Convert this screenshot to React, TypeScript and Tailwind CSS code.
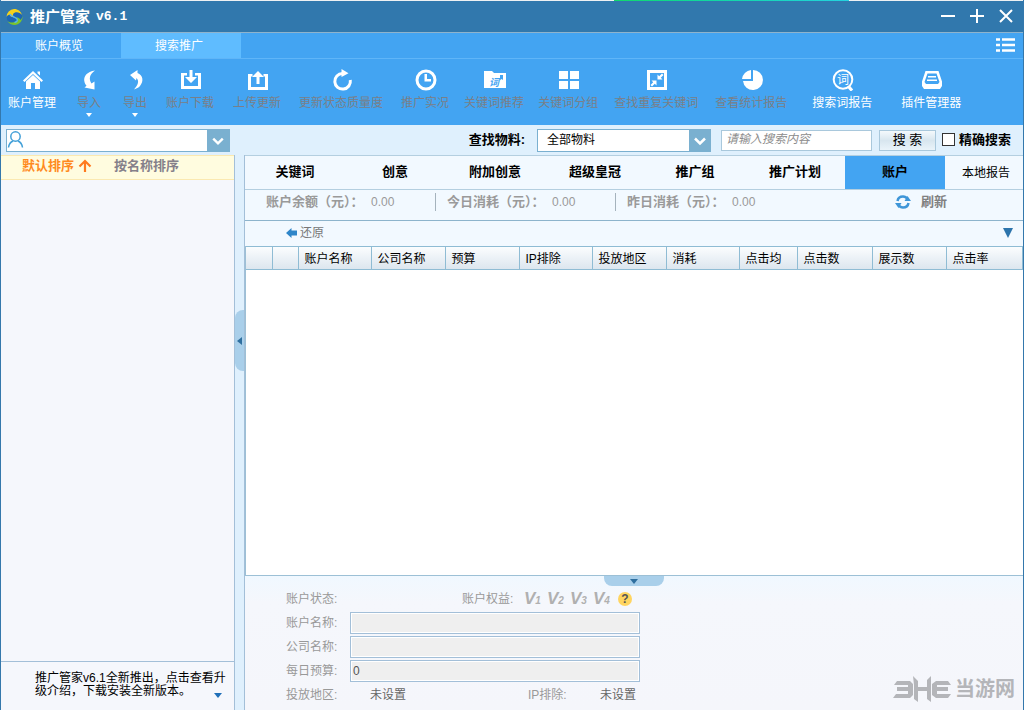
import { useState } from 'react';
import type { ReactNode } from 'react';

interface Tool {
  label: string;
  icon: ReactNode;
  margin: string;
  enabled?: boolean;
  menu?: boolean;
}

const icons = {
  home: (
    <>
      <path d="M1 11.5 11 2l10 9.500-1.500 1.500L11 5l-8.500 8z" />
      <path d="M15.500 2.500h2.500v4l-2.500-2.300z" />
      <path d="M4 12.500 11 6l7 6.500V20h-5v-6H9v6H4z" />
    </>
  ),
  importArrow: <path d="M16 1.500C8 2.500 4 7.500 5.500 13c.4 1.500 1 2.500 2 3.700L5.500 18.500l10 2V12.500l-3 2C9.500 10 10.500 5 16 1.500z" />,
  exportArrow: <path d="M5 6 12.500 1v3C18 6 19 12 15 17c-1.500 1.800-3.500 2.700-6 3.500C13 16 14.500 12 11.500 9L11 11.500z" />,
  download: (
    <>
      <path d="M1 4h6v2.500H4V17h14V6.500h-3V4h6v16H1z" />
      <path d="M9.500 1h3v7H17l-6 6-6-6h4.500z" />
    </>
  ),
  upload: (
    <>
      <path d="M1 5h4.500v2.500H4V18h14V7.500h-1.500V5H21v16H1z" />
      <path d="M9.500 15h3V8H17l-6-6-6 6h4.500z" />
    </>
  ),
  refresh: (
    <>
      <path d="M11.500 4.500A7.800 7.800 0 1 0 19.300 11" fill="none" stroke="currentColor" strokeWidth="3" />
      <path d="M10.500 0v8l7-3.800z" />
    </>
  ),
  clock: (
    <>
      <circle cx="11" cy="11" r="9" fill="none" stroke="currentColor" strokeWidth="3" />
      <path d="M9.500 5h2.500v5h4v2.500H9.500z" />
    </>
  ),
  folder: (
    <>
      <path d="M0 2h8l2 2h12v15H0z" />
      <path d="M16 6h3v5l-1.500-1-1.500 1z" fill="#43a4f2" />
      <text x="5" y="17" fontSize="10" fontWeight="700" fontStyle="italic" fill="#43a4f2">词</text>
    </>
  ),
  tiles: <path d="M1 2h9v8H1zM12 2h9v8h-9zM1 12h9v8H1zM12 12h9v8h-9z" />,
  shrink: (
    <>
      <path fillRule="evenodd" d="M1 1h20v20H1zM4 4v14h14V4z" />
      <path d="M11.500 10.500v-5l1.700 1.700L16 4.500 17.500 6l-2.700 2.800 1.700 1.700zM10.500 11.500v5l-1.700-1.700L6 17.500 4.500 16l2.700-2.800-1.700-1.700z" />
    </>
  ),
  pie: (
    <>
      <path d="M12 1a10 10 0 1 1-10 11h10z" />
      <path d="M10 1v9H1A10 10 0 0 1 10 1z" />
    </>
  ),
  wordSearch: (
    <>
      <circle cx="11" cy="10.500" r="9.300" fill="none" stroke="currentColor" strokeWidth="2" />
      <path d="m16.500 17.500 3.500 4" stroke="currentColor" strokeWidth="3.200" />
      <text x="5" y="15" fontSize="12">词</text>
    </>
  ),
  plugin: (
    <>
      <path fillRule="evenodd" d="M4.500 2h13L21 12.500V17l-2 3H3l-2-3v-4.500zM6.500 4.500 3.500 13l1.500 2h12l1.500-2-3-8.500z" />
      <path d="M7 7h8v1.500H7zM6 10.500h10V12H6z" />
    </>
  ),
};

const tools: Tool[] = [
  { label: '账户管理', icon: icons.home, margin: 'ml-[7px]', enabled: true },
  { label: '导入', icon: icons.importArrow, margin: 'ml-[21px]', menu: true },
  { label: '导出', icon: icons.exportArrow, margin: 'ml-[22px]', menu: true },
  { label: '账户下载', icon: icons.download, margin: 'ml-[19px]' },
  { label: '上传更新', icon: icons.upload, margin: 'ml-[19px]' },
  { label: '更新状态质量度', icon: icons.refresh, margin: 'ml-[18px]' },
  { label: '推广实况', icon: icons.clock, margin: 'ml-[18px]' },
  { label: '关键词推荐', icon: icons.folder, margin: 'ml-[15px]' },
  { label: '关键词分组', icon: icons.tiles, margin: 'ml-[14px]' },
  { label: '查找重复关键词', icon: icons.shrink, margin: 'ml-4' },
  { label: '查看统计报告', icon: icons.pie, margin: 'ml-[17px]' },
  { label: '搜索词报告', icon: icons.wordSearch, margin: 'ml-[25px]', enabled: true },
  { label: '插件管理器', icon: icons.plugin, margin: 'ml-[29px]', enabled: true },
];

const tabs = ['关键词', '创意', '附加创意', '超级皇冠', '推广组', '推广计划', '账户'];

const stats = [
  { label: '账户余额（元）：', value: '0.00' },
  { label: '今日消耗（元）：', value: '0.00' },
  { label: '昨日消耗（元）：', value: '0.00' },
];

const columns = [
  { label: '', width: 'w-[26px]' },
  { label: '', width: 'w-[26px]' },
  { label: '账户名称', width: 'w-[73px]' },
  { label: '公司名称', width: 'w-[74px]' },
  { label: '预算', width: 'w-[74px]' },
  { label: 'IP排除', width: 'w-[73px]' },
  { label: '投放地区', width: 'w-[74px]' },
  { label: '消耗', width: 'w-[73px]' },
  { label: '点击均', width: 'w-[58px]' },
  { label: '点击数', width: 'w-[75px]' },
  { label: '展示数', width: 'w-[74px]' },
  { label: '点击率', width: 'w-[76px]' },
];

function Chevron() {
  return (
    <svg viewBox="0 0 22 22" className="size-full" fill="none" stroke="#fff" strokeWidth="2.500">
      <path d="m6 9 5 5 5-5" />
    </svg>
  );
}

function TitleBar() {
  return (
    <header className="flex h-8 items-center border-b border-[#8fb3cc] bg-[#3178ad] pl-[5px] text-white">
      <svg viewBox="0 0 18 18" className="size-4.5">
        <circle cx="8.500" cy="9" r="7.800" fill="#1c66b4" />
        <path d="M.5 9A8 8 0 0 1 8 1c3.500-.2 7 2 8 6-2-2.500-4.500-3.200-7-2.500-2.600.8-2.500 3.500-.5 4.700C6 9.500 4 8.500 3.500 6.500 2 7 1 8 .5 9z" fill="#f4d21c" />
        <path d="M16.500 8c.5 4.500-3 9-8 9-3 0-5.500-1.500-7-4 2.500 1.800 5.500 2 7.800.8 2-1 2.200-3 .7-4.600 2.500.3 4 1.300 4.500 2.800 1-.8 1.700-2.200 2-4z" fill="#7cc52c" />
        <path d="M4 6c.5 2.500 5.500 3 7 5 1.200 1.700-.5 3.200-2.500 3.300" fill="none" stroke="#55b4f2" strokeWidth="1.300" />
      </svg>
      <h1 className="ml-1.5 flex items-center gap-1.5 text-[15px] leading-5 font-bold">
        推广管家
        <span className="font-['Liberation_Mono',monospace] text-[13px]">v6.1</span>
      </h1>
      <div className="mr-[9px] ml-auto flex gap-[13px]">
        <button type="button" aria-label="最小化" className="size-4">
          <svg viewBox="0 0 16 16" stroke="#fff" strokeWidth="2"><path d="M1 7h14" /></svg>
        </button>
        <button type="button" aria-label="最大化" className="size-4">
          <svg viewBox="0 0 16 16" stroke="#fff" strokeWidth="2"><path d="M1 7h14M8 0v14" /></svg>
        </button>
        <button type="button" aria-label="关闭" className="size-4">
          <svg viewBox="0 0 16 16" stroke="#fff" strokeWidth="2"><path d="m2 1 12 12M14 1 2 13" /></svg>
        </button>
      </div>
    </header>
  );
}

function Toolbar() {
  return (
    <div className="bg-[#43a4f2] text-white">
      <nav className="flex h-[26px] border-b border-[#5fb5f8]">
        <button type="button" className="w-[120px] pr-1">账户概览</button>
        <button type="button" className="w-[120px] bg-[#5fbcff] pr-1">搜索推广</button>
        <button type="button" aria-label="菜单" className="mr-[7px] mb-0.5 ml-auto">
          <svg viewBox="0 0 20 16" className="h-4 w-5" stroke="#fff" strokeWidth="2.500">
            <path d="M0 2.500h4M6 2.500h13M0 8h4M6 8h13M0 13.500h4M6 13.500h13" />
          </svg>
        </button>
      </nav>
      <div className="flex h-[66px] items-start pt-2.5">
        {tools.map(t => (
          <button
            key={t.label}
            type="button"
            disabled={!t.enabled}
            className={`flex shrink-0 flex-col items-center leading-4 ${t.margin} ${
              t.enabled ? 'text-white' : 'text-[#7a7f88]'
            }`}
          >
            <svg viewBox="0 0 22 22" className="ml-0.5 size-[22px] text-white" fill="currentColor">
              {t.icon}
            </svg>
            <span className="mt-1">{t.label}</span>
            {t.menu && (
              <svg viewBox="0 0 6 4" className="mt-0.5 h-1 w-1.5" fill="#fff"><path d="M0 0h6L3 4z" /></svg>
            )}
          </button>
        ))}
      </div>
    </div>
  );
}

function FilterBar() {
  const [search, setSearch] = useState('');

  return (
    <div className="flex h-[30px] items-center bg-[#dff0fd] pr-3 pl-[5px]">
      <div className="flex h-[23px] w-[224px] border border-[#7ab0d0] bg-white">
        <svg viewBox="0 0 18 20" className="h-5 w-[18px]" fill="none" stroke="#43a0d8" strokeWidth="1.500">
          <circle cx="8.500" cy="6.500" r="4.700" />
          <path d="M1.500 17.500c.5-3.500 2-5.500 4.500-6.500M15.500 17.500c-.5-3.500-2-5.500-4.500-6.500" />
        </svg>
        <input type="text" aria-label="选择账户" className="min-w-0 flex-1 outline-none" />
        <button type="button" aria-label="展开账户" className="w-[22px] bg-[#7ab0d0]"><Chevron /></button>
      </div>
      <label htmlFor="material" className="ml-auto text-[13px] font-bold">查找物料:</label>
      <div className="relative ml-3 h-[23px] w-[174px]">
        <select id="material" className="size-full appearance-none border border-[#7ab0d0] bg-white pr-6 pl-[9px] outline-none">
          <option>全部物料</option>
        </select>
        <span className="pointer-events-none absolute inset-y-0 right-0 w-[22px] bg-[#7ab0d0]"><Chevron /></span>
      </div>
      <input
        type="text"
        aria-label="搜索内容"
        value={search}
        onChange={e => setSearch(e.target.value)}
        placeholder="请输入搜索内容"
        className="ml-2.5 h-[21px] w-[151px] border border-[#a9c8dc] bg-white px-1 pb-0.5 outline-none placeholder:text-[#8c8c8c] placeholder:italic"
      />
      <button
        type="button"
        className="ml-[7px] h-[21px] w-[57px] border border-[#a9c8dc] bg-linear-to-b from-[#f4f9fc] via-[#d8e6ef] to-[#eaf4fa] pb-0.5 text-[13px] leading-[17px]"
      >
        搜 索
      </button>
      <label className="ml-1.5 flex items-center gap-1 text-[13px] font-bold">
        <input type="checkbox" className="size-[13px] appearance-none border border-[#333] bg-white checked:bg-[#43a4f2]" />
        精确搜索
      </label>
    </div>
  );
}

function Sidebar() {
  return (
    <aside className="flex w-[233px] shrink-0 flex-col bg-[#f5f7fc]">
      <div className="flex h-[25px] items-center border-y border-[#fbe9b0] bg-[#fffcdf] pb-1 pl-[21px] text-[13px] leading-5 font-bold">
        <button type="button" className="flex items-center gap-1 text-[#ff8a1e]">
          默认排序
          <svg viewBox="0 0 14 14" className="size-3.5" fill="none" stroke="#ff7a1e" strokeWidth="2.200">
            <path d="M7 13V2M1.500 7.500 7 2l5.500 5.500" />
          </svg>
        </button>
        <button type="button" className="ml-[22px] text-[#85808a]">按名称排序</button>
      </div>
      <div className="mt-auto flex h-[49px] items-start border-t border-[#a3bfd8] pt-2.5 pl-[34px]">
        <a href="#news" className="leading-[13px] whitespace-nowrap text-black">
          推广管家v6.1全新推出，点击查看升
          <br />
          级介绍，下载安装全新版本。
        </a>
        <svg viewBox="0 0 8 5" className="-ml-3 mt-[21px] h-[5px] w-2 shrink-0" fill="#1f6fb8"><path d="M0 0h8L4 5z" /></svg>
      </div>
    </aside>
  );
}

function AccountTable() {
  return (
    <div className="flex-1 border-b border-l border-[#9cc0d6] bg-white pr-px">
      <table className="w-full table-fixed border-collapse">
        <thead>
          <tr className="h-[23px] bg-linear-to-b from-[#fbfdfe] to-[#dbe5ee]">
            {columns.map((c, i) => (
              <th
                key={i}
                scope="col"
                className={`border-y border-r border-[#8fbcd4] p-0 pt-px pl-1.5 text-left leading-4 font-normal whitespace-nowrap ${c.width}`}
              >
                {c.label}
              </th>
            ))}
          </tr>
        </thead>
        <tbody />
      </table>
    </div>
  );
}

function Field({ id, label, value }: { id: string; label: string; value: string }) {
  return (
    <div className="flex h-6 items-center">
      <label htmlFor={id} className="w-16 text-[#999]">{label}:</label>
      <input
        id={id}
        readOnly
        defaultValue={value}
        className="h-[22px] w-[290px] border border-[#a3bfd8] bg-[#efefef] px-0.5 text-[#555] shadow-[inset_0_0_0_1px_#fff] outline-none"
      />
    </div>
  );
}

function Details() {
  return (
    <section className="relative h-[134px] bg-linear-to-b from-[#f0f8ff] via-[#f5f7fc] via-20% to-[#f5f6fb]">
      <button type="button" aria-label="收起" className="mx-auto flex h-2.5 w-[60px] items-center justify-center rounded-b-lg bg-[#a9cfea]">
        <svg viewBox="0 0 8 5" className="h-[5px] w-2" fill="#2f6f9f"><path d="M0 0h8L4 5z" /></svg>
      </button>
      <div className="pt-px pl-[41px]">
        <div className="flex h-6 items-center text-[#999]">
          <span className="w-44">账户状态:</span>
          <span className="w-[62px]">账户权益:</span>
          {['1', '2', '3', '4'].map(n => (
            <span key={n} className="flex w-[23px] items-end leading-4 font-bold text-[#b0b0b0] italic">
              <span className="text-[17px]">V</span>
              <span className="text-[10px] leading-3">{n}</span>
            </span>
          ))}
          <button type="button" aria-label="帮助" className="ml-0.5 size-3.5 rounded-full bg-[#ffd560] leading-3.5 font-bold text-[#555]">?</button>
        </div>
        <Field id="accountName" label="账户名称" value="" />
        <Field id="companyName" label="公司名称" value="" />
        <Field id="dailyBudget" label="每日预算" value="0" />
        <div className="flex h-6 items-center text-[#999]">
          <span className="w-[84px]">投放地区:</span>
          <span className="w-[158px] text-[#666]">未设置</span>
          <span className="w-[72px]">IP排除:</span>
          <span className="text-[#666]">未设置</span>
        </div>
      </div>
      <div className="absolute right-2 bottom-2 flex items-center gap-1 text-[#b4b5b9]">
        <svg viewBox="0 0 58 26" className="h-[26px] w-[58px]" fill="currentColor">
          <path d="M4 5h13l3 3v11l-3 3H0l3-4h12v-3H4v-4h11V9H1z" />
          <path d="m20 0 5 5v6h9V4l4-4v26l-4-3v-8h-9v11l-4-3V9z" />
          <path d="M55 5H43l-4 3v11l4 3h12l3-4H44v-3h11v-4H44V9h14z" />
        </svg>
        <span className="text-[20px] leading-6 font-bold">当游网</span>
      </div>
    </section>
  );
}

export default function App() {
  const [activeTab, setActiveTab] = useState('账户');

  return (
    <div className="flex min-h-screen flex-col border-x border-[#3478ac] font-['Liberation_Sans','Noto_Sans_CJK_SC',sans-serif] text-xs text-black">
      <div className="flex h-px bg-[#eef1f3]">
        <div className="ml-[60%] w-[23%] bg-linear-to-r from-[#12d86b] to-[#25d3e0]" />
      </div>
      <TitleBar />
      <Toolbar />
      <FilterBar />
      <main className="flex flex-1">
        <Sidebar />
        <div className="w-[11px] shrink-0 border-x border-[#a3bfd8] bg-[#dff0fd]">
          <button type="button" aria-label="收起侧栏" className="mt-[155px] flex h-[61px] w-full items-center justify-center rounded-l-lg bg-[#a9cfea]">
            <svg viewBox="0 0 5 8" className="h-2 w-[5px]" fill="#2f6f9f"><path d="M5 0v8L0 4z" /></svg>
          </button>
        </div>
        <div className="flex min-w-0 flex-1 flex-col bg-[#f2f9ff]">
          <nav className="grid h-[35px] grid-cols-[repeat(7,50fr)_39fr] border-y border-[#b4cfe0] text-[13px]">
            {tabs.map(t => (
              <button
                key={t}
                type="button"
                onClick={() => setActiveTab(t)}
                className={`pb-0.5 font-bold ${t === activeTab ? 'bg-[#43a4f2]' : ''}`}
              >
                {t}
              </button>
            ))}
            <button type="button" className="pl-1 text-xs">本地报告</button>
          </nav>
          <div className="flex h-[31px] items-start border-b border-[#8db4cc] pt-[3px] pl-2.5 leading-[18px] text-[#9a9a9a]">
            {stats.map((s, i) => (
              <div key={s.label} className={`flex w-[180px] pl-[11px] ${i > 0 ? 'border-l border-[#a5b3bd]' : ''}`}>
                <span className="w-[105px] text-[13px] font-bold">{s.label}</span>
                <span>{s.value}</span>
              </div>
            ))}
            <button type="button" className="mr-[76px] ml-auto flex items-center gap-2.5 text-[13px] font-bold text-[#808080]">
              <svg viewBox="0 0 16 14" className="h-3.5 w-4" fill="none" stroke="#3f96d8" strokeWidth="2.500">
                <path d="M2.500 6C3 3 5.500 1.500 8 1.500c2 0 3.500 1 4.500 2.500M13.500 8c-.5 3-3 4.500-5.500 4.500-2 0-3.500-1-4.500-2.500" />
                <path d="M9.500 6H16l-3.500-5zM6.500 8H0l3.500 5z" fill="#3f96d8" stroke="none" />
              </svg>
              刷新
            </button>
          </div>
          <div className="flex h-[25px] items-center pr-2.5 pb-0.5 pl-[41px]">
            <button type="button" className="flex items-center gap-[3px] text-[#777]">
              <svg viewBox="0 0 11 10" className="h-2.5 w-[11px]" fill="#2f86c9"><path d="M0 5l5.500-5v2.500H11v5H5.500V10z" /></svg>
              还原
            </button>
            <button type="button" aria-label="展开" className="ml-auto">
              <svg viewBox="0 0 10 10" className="size-2.5" fill="#2c74ac"><path d="M0 0h10L5 10z" /></svg>
            </button>
          </div>
          <AccountTable />
          <Details />
        </div>
      </main>
    </div>
  );
}
